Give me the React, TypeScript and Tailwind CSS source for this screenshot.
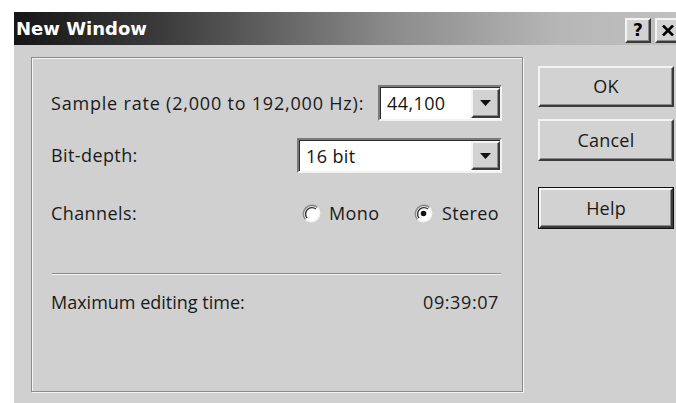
import React from "react";

const ui = { fontFamily: "'Open Sans', 'DejaVu Sans', sans-serif" };

function Raised({ children, className = "" }: { children?: React.ReactNode; className?: string }) {
  return (
    <div
      className={`flex items-center justify-center bg-[#d2d2d2] border-2 border-t-[#f4f4f4] border-l-[#f4f4f4] border-r-[#3a3a3a] border-b-[#3a3a3a] shadow-[inset_-1px_-1px_0_#8a8a8a] ${className}`}
    >
      {children}
    </div>
  );
}

function DropArrow() {
  return (
    <Raised className="w-[29px] h-full">
      <svg width="11" height="6" viewBox="0 0 11 6">
        <path d="M0 0 H11 L5.5 6 Z" fill="#111" />
      </svg>
    </Raised>
  );
}

function Combo({ value, className }: { value: string; className: string }) {
  return (
    <div
      className={`flex bg-white border-2 border-t-[#7a7a7a] border-l-[#7a7a7a] border-r-[#f2f2f2] border-b-[#f2f2f2] shadow-[inset_1px_1px_0_#2e2e2e] ${className}`}
    >
      <div className="flex-1 flex items-center pl-[7px] pt-[1px] text-[#151515]">{value}</div>
      <div className="py-[1px]">
        <DropArrow />
      </div>
    </div>
  );
}

function Radio({ checked }: { checked?: boolean }) {
  return (
    <svg width="19" height="19" viewBox="0 0 19 19">
      <circle cx="9.5" cy="9.5" r="8.5" fill="#fff" />
      <path d="M3.5 15.5 A8.5 8.5 0 0 1 15.5 3.5" fill="none" stroke="#8a8a8a" strokeWidth="1.6" />
      <path d="M5 14 A6.4 6.4 0 0 1 14 5" fill="none" stroke="#2e2e2e" strokeWidth="1.4" />
      <path d="M15.5 3.5 A8.5 8.5 0 0 1 3.5 15.5" fill="none" stroke="#f2f2f2" strokeWidth="1.6" />
      {checked && <circle cx="9.5" cy="9.5" r="2.8" fill="#111" />}
    </svg>
  );
}

export default function App() {
  return (
    <div className="w-[676px] h-[403px] bg-white overflow-hidden" style={ui}>
      <div className="ml-[14px] mt-[12px] w-[680px] h-[391px] flex flex-col">
        {/* title bar */}
        <div className="h-[33px] flex items-center bg-[linear-gradient(90deg,#161616_0%,#3c3c3c_22%,#8a8a8a_55%,#b6b6b6_80%,#c2c2c2_100%)]">
          <span
            className="pl-[2px] text-white font-bold text-[18px] leading-none"
            style={{ fontFamily: "'DejaVu Sans', sans-serif" }}
          >
            New Window
          </span>
          <div className="ml-auto flex gap-[4px] pr-[13px] pt-[3px]">
            <Raised className="w-[26px] h-[25px]">
              <span
                className="text-[17px] font-bold text-black leading-none"
                style={{ fontFamily: "'DejaVu Sans', sans-serif" }}
              >
                ?
              </span>
            </Raised>
            <Raised className="w-[26px] h-[25px]">
              <svg width="12" height="11" viewBox="0 0 12 11">
                <path d="M1 0.5 L11 10.5 M11 0.5 L1 10.5" stroke="#000" strokeWidth="2.6" />
              </svg>
            </Raised>
          </div>
        </div>

        {/* dialog body */}
        <div className="flex-1 bg-[#d0d0d0] flex pl-[17px] pt-[12px]">
          {/* settings group */}
          <div className="w-[492px] h-[335px] border border-[#8c8c8c] shadow-[1px_1px_0_#f4f4f4,inset_1px_1px_0_#f4f4f4] flex flex-col pl-[19px] pr-[20px] text-[18px] tracking-[0.4px] text-[#1a1a1a]">
            <div className="mt-[27px] h-[36px] flex items-center">
              <span className="flex-1 tracking-[0.8px]">Sample rate (2,000 to 192,000 Hz):</span>
              <Combo value="44,100" className="w-[124px] h-[36px]" />
            </div>
            <div className="mt-[17px] h-[35px] flex items-center">
              <span className="flex-1">Bit-depth:</span>
              <Combo value="16 bit" className="w-[205px] h-[35px]" />
            </div>
            <div className="mt-[29px] h-[22px] flex items-center">
              <span className="w-[251px]">Channels:</span>
              <div className="w-[112px] flex items-center gap-[8px]">
                <Radio />
                <span>Mono</span>
              </div>
              <div className="flex items-center gap-[9px]">
                <Radio checked />
                <span>Stereo</span>
              </div>
            </div>
            <div className="mt-[49px] ml-[1px] mr-[1px] h-[2px] border-t border-[#8c8c8c] border-b border-b-[#f4f4f4]" />
            <div className="mt-[16px] h-[22px] flex items-center justify-between pr-[3px]">
              <span className="tracking-[0px]">Maximum editing time:</span>
              <span className="tracking-[0.6px]">09:39:07</span>
            </div>
          </div>

          {/* action buttons */}
          <div className="ml-[15px] flex flex-col pt-[9px] text-[18px] tracking-[0.2px] text-[#1a1a1a]">
            <Raised className="w-[136px] h-[41px]">OK</Raised>
            <Raised className="mt-[12px] w-[136px] h-[42px]">Cancel</Raised>
            <div className="mt-[26px] w-[136px] h-[42px] border border-[#111]">
              <Raised className="w-full h-full">Help</Raised>
            </div>
          </div>
        </div>
      </div>
    </div>
  );
}
